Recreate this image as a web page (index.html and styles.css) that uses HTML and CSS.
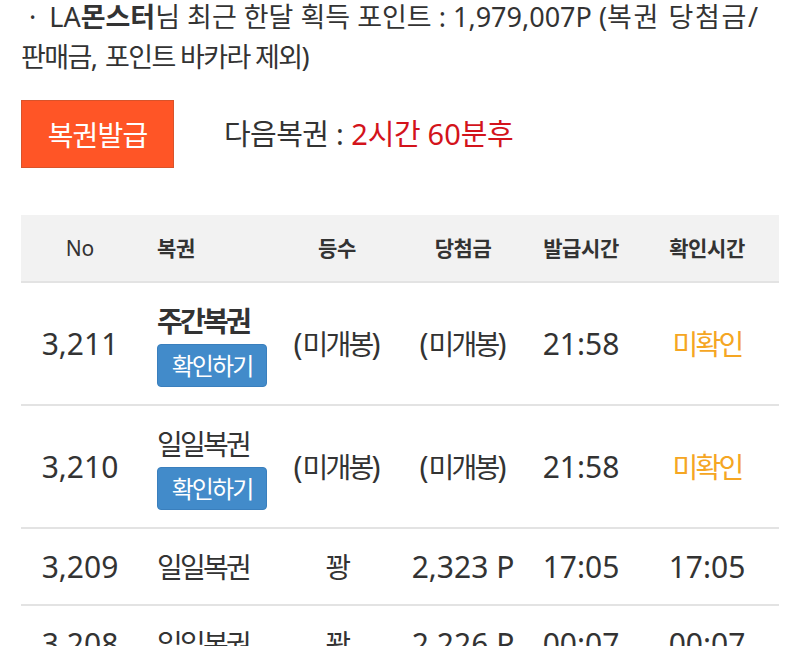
FILE: index.html
```html
<!DOCTYPE html>
<html lang="ko">
<head>
<meta charset="utf-8">
<link rel="stylesheet" href="styles.css">
</head>
<body>
<div class="page">
  <p class="summary"><span class="dot">·</span>LA<b class="ko">몬스터</b><span class="ko">님 최근 한달 획득 포인트</span> : 1,979,007P (<span class="ko wide">복권 당첨금</span>/ <span class="ko tight">판매금</span>, <span class="ko tight">포인트 바카라 제외</span>)</p>

  <div class="issue">
    <button class="issue-btn" type="button">복권발급</button>
    <div class="next"><span class="ko">다음복권</span> : <span class="remain">2<span class="ko">시간</span> 60<span class="ko">분후</span></span></div>
  </div>

  <div class="table">
    <div class="row head">
      <div class="c c-no">No</div>
      <div class="c c-name">복권</div>
      <div class="c c-rank">등수</div>
      <div class="c c-prize">당첨금</div>
      <div class="c c-issue">발급시간</div>
      <div class="c c-check">확인시간</div>
    </div>

    <div class="row">
      <div class="c c-no">3,211</div>
      <div class="c c-name">
        <div class="title bold ko">주간복권</div>
        <button class="check-btn" type="button">확인하기</button>
      </div>
      <div class="c c-rank">(<span class="ko">미개봉</span>)</div>
      <div class="c c-prize">(<span class="ko">미개봉</span>)</div>
      <div class="c c-issue">21:58</div>
      <div class="c c-check pending"><span class="ko">미확인</span></div>
    </div>

    <div class="row">
      <div class="c c-no">3,210</div>
      <div class="c c-name">
        <div class="title ko">일일복권</div>
        <button class="check-btn" type="button">확인하기</button>
      </div>
      <div class="c c-rank">(<span class="ko">미개봉</span>)</div>
      <div class="c c-prize">(<span class="ko">미개봉</span>)</div>
      <div class="c c-issue">21:58</div>
      <div class="c c-check pending"><span class="ko">미확인</span></div>
    </div>

    <div class="row">
      <div class="c c-no">3,209</div>
      <div class="c c-name"><span class="ko">일일복권</span></div>
      <div class="c c-rank"><span class="ko">꽝</span></div>
      <div class="c c-prize">2,323 P</div>
      <div class="c c-issue">17:05</div>
      <div class="c c-check">17:05</div>
    </div>

    <div class="row">
      <div class="c c-no">3,208</div>
      <div class="c c-name"><span class="ko">일일복권</span></div>
      <div class="c c-rank"><span class="ko">꽝</span></div>
      <div class="c c-prize">2,226 P</div>
      <div class="c c-issue">00:07</div>
      <div class="c c-check">00:07</div>
    </div>
  </div>
</div>
</body>
</html>
```

FILE: styles.css
```css
* { box-sizing: border-box; }

html, body {
  margin: 0;
  padding: 0;
  background: #ffffff;
  overflow: hidden;
}

body {
  font-family: "Noto Sans", "Noto Sans CJK KR", sans-serif;
  color: #333333;
}

.page {
  padding: 0 21px;
}

.summary {
  margin: -3px 0 0;
  font-size: 27px;
  line-height: 40px;
}

.summary .ko {
  letter-spacing: 0;
}

.summary .ko.wide {
  letter-spacing: 0.06em;
}

.summary .ko.tight {
  letter-spacing: -0.06em;
}

.summary b {
  font-weight: 700;
}

.dot {
  display: inline-block;
  margin: 0 13px 0 8px;
}

.issue {
  display: flex;
  align-items: center;
  gap: 50px;
  margin-top: 23px;
}

.issue-btn {
  width: 153px;
  height: 68px;
  background: #ff5526;
  border: 1px solid #d9532a;
  color: #ffffff;
  font-family: inherit;
  font-size: 28px;
  letter-spacing: -0.03em;
  padding: 0;
}

.next {
  font-size: 29px;
  line-height: 40px;
}

.next .ko {
  letter-spacing: -0.02em;
}

.remain {
  color: #d3131b;
}

.table {
  margin-top: 47px;
}

.row {
  display: grid;
  grid-template-columns: 118px 136px 124px 128px 108px 144px;
  align-items: center;
  border-bottom: 2px solid #e3e3e3;
  font-size: 30px;
  line-height: 40px;
}

.row .ko {
  font-size: 28px;
  letter-spacing: -0.1em;
}

.row.head {
  background: #f2f2f2;
  font-size: 21px;
  font-weight: 700;
  letter-spacing: -0.02em;
  height: 68px;
}

.row.head .c-no {
  font-weight: 400;
  letter-spacing: 0;
}

.c {
  text-align: center;
  padding: 18px 0 17px;
}

.row.head .c {
  padding-top: 0;
  padding-bottom: 0;
}

.c-name {
  text-align: left;
  padding-left: 18px;
}

.title {
  margin-bottom: 3px;
}

.bold {
  font-weight: 700;
}

.check-btn {
  display: block;
  width: 110px;
  height: 43px;
  background: #428bca;
  border: 1px solid #3a7fbd;
  border-radius: 4px;
  color: #ffffff;
  font-family: inherit;
  font-size: 24px;
  letter-spacing: -0.08em;
  padding: 0;
  line-height: 41px;
}

.pending {
  color: #f5a623;
}
```
